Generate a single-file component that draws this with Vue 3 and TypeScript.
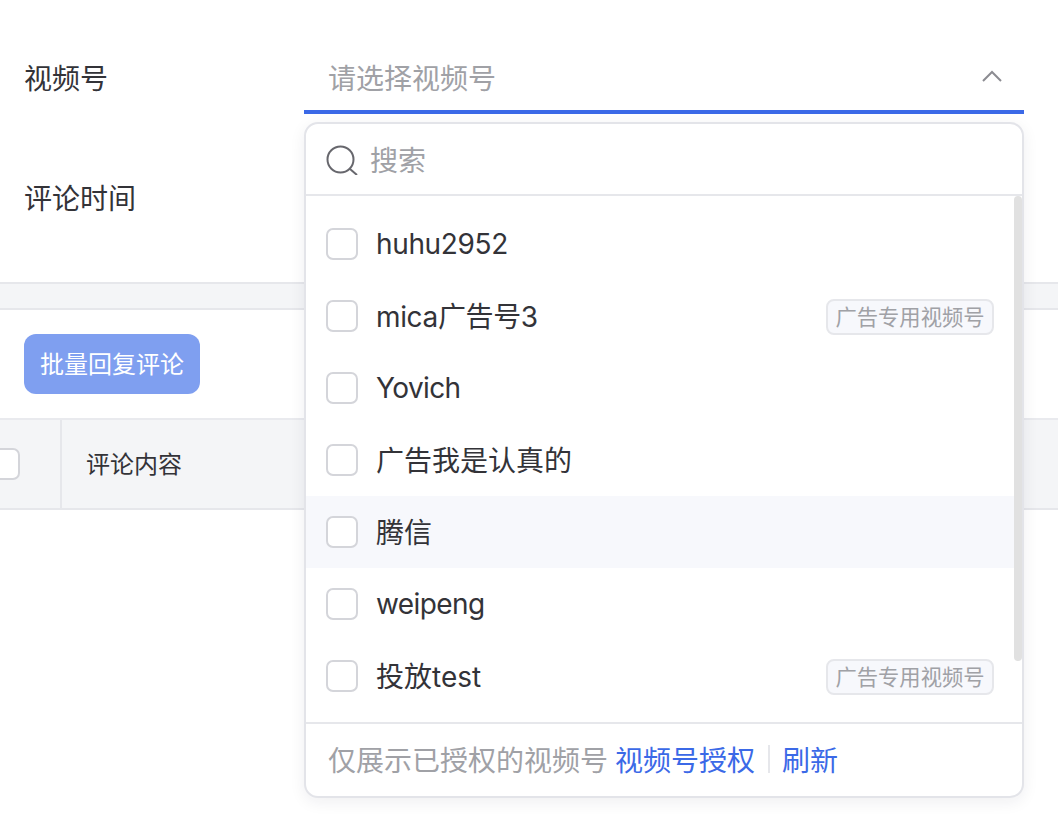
<script setup lang="ts">
interface Account {
  name: string
  ad: boolean
  hover?: boolean
}
const accounts: Account[] = [
  { name: 'huhu2952', ad: false },
  { name: 'mica广告号3', ad: true },
  { name: 'Yovich', ad: false },
  { name: '广告我是认真的', ad: false },
  { name: '腾信', ad: false, hover: true },
  { name: 'weipeng', ad: false },
  { name: '投放test', ad: true },
]
const nameClass = (name: string) => ({
  tight: /^[a-zA-Z]/.test(name),
  tighter: /^[a-zA-Z]+$/.test(name),
  cjk: /[^\x00-\x7f]/.test(name),
})
</script>

<template>
  <div class="page">
    <section class="form">
      <div class="row">
        <span class="label">视频号</span>
        <div class="select-wrap">
          <div class="select">
            <span class="placeholder">请选择视频号</span>
            <svg class="chevron" width="20" height="12" viewBox="0 0 20 12" fill="none">
              <path d="M1 11L10 2L19 11" stroke="#8c8c92" stroke-width="2" />
            </svg>
          </div>
          <div class="dropdown">
            <div class="search">
              <svg class="search-icon" width="32" height="32" viewBox="0 0 32 32" fill="none">
                <circle cx="14.500" cy="16.500" r="13" stroke="#67676d" stroke-width="2" />
                <path d="M24 26L31 32" stroke="#67676d" stroke-width="2" />
              </svg>
              <span class="search-text">搜索</span>
            </div>
            <div class="list">
              <div class="scrollbar"></div>
              <div v-for="a in accounts" :key="a.name" class="item" :class="{ hover: a.hover }">
                <span class="checkbox"></span>
                <span class="item-name" :class="nameClass(a.name)">{{ a.name }}</span>
                <span v-if="a.ad" class="tag">广告专用视频号</span>
              </div>
            </div>
            <div class="footer">
              <span class="hint">仅展示已授权的视频号</span>
              <span class="link">视频号授权</span>
              <span class="sep"></span>
              <span class="link">刷新</span>
            </div>
          </div>
        </div>
      </div>
      <div class="row">
        <span class="label">评论时间</span>
      </div>
    </section>
    <div class="band"></div>
    <div class="toolbar">
      <button class="batch" type="button">批量回复评论</button>
    </div>
    <div class="thead">
      <div class="cell-check"><span class="checkbox"></span></div>
      <div class="cell-content">评论内容</div>
    </div>
  </div>
</template>

<style>
html, body { margin: 0; background: #fff; }
</style>

<style scoped>
.page {
  width: 1058px;
  height: 814px;
  overflow: hidden;
  background: #fff;
  color: #333338;
  font-family: Inter, "Noto Sans CJK SC", sans-serif;
  font-size: 28px;
}
.form {
  display: flex;
  flex-direction: column;
  gap: 48px;
  padding: 42px 34px 48px 24px;
}
.row {
  display: flex;
  align-items: center;
  height: 72px;
}
.label {
  width: 280px;
  flex: none;
  padding-bottom: 2px;
}
.select-wrap {
  position: relative;
  flex: 1;
  height: 72px;
}
.select {
  box-sizing: border-box;
  height: 72px;
  display: flex;
  align-items: center;
  justify-content: space-between;
  padding: 0 22px 0 24px;
  border-bottom: 4px solid #3b69e7;
}
.placeholder { color: #a0a1a6; padding-top: 2px; }
.chevron { margin-top: 0; }
.dropdown {
  position: absolute;
  z-index: 2;
  top: 80px;
  left: 0;
  right: 0;
  box-sizing: border-box;
  height: 676px;
  display: flex;
  flex-direction: column;
  background: #fff;
  border: 2px solid #e3e4e9;
  border-radius: 14px;
  box-shadow: 0 4px 16px rgba(30, 35, 60, 0.07);
}
.search {
  box-sizing: border-box;
  height: 72px;
  flex: none;
  display: flex;
  align-items: center;
  padding-left: 20px;
  border-bottom: 2px solid #e6e7eb;
}
.search-icon { flex: none; }
.search-text { margin-left: 12px; color: #a0a1a6; }
.list {
  position: relative;
  flex: 1;
  padding: 12px 0 10px;
}
.scrollbar {
  position: absolute;
  top: 0;
  right: 0;
  width: 8px;
  height: 465px;
  border-radius: 4px;
  background: #e1e1e1;
}
.item {
  height: 72px;
  display: flex;
  align-items: center;
  padding: 0 28px 0 20px;
}
.item.hover { background: #f7f8fc; }
.checkbox {
  box-sizing: border-box;
  flex: none;
  width: 32px;
  height: 32px;
  border: 2px solid #d4d5da;
  border-radius: 7px;
  background: #fff;
}
.item-name {
  margin-left: 18px;
  flex: 1;
  color: #333338;
}
.item-name.tight { letter-spacing: -0.35px; }
.item-name.tighter { letter-spacing: -0.6px; }
.item-name.cjk { padding-bottom: 2px; }
.tag {
  box-sizing: border-box;
  height: 36px;
  width: 168px;
  margin-top: 1px;
  padding-bottom: 2px;
  display: flex;
  align-items: center;
  justify-content: center;
  flex: none;
  font-size: 21.300px;
  white-space: nowrap;
  color: #a0a1a6;
  background: #f7f8fc;
  border: 2px solid #e6e7eb;
  border-radius: 8px;
}
.footer {
  box-sizing: border-box;
  flex: none;
  height: 74px;
  display: flex;
  align-items: center;
  padding: 0 0 2px 22px;
  border-top: 2px solid #e6e7eb;
  white-space: nowrap;
}
.hint { color: #a0a1a6; }
.link { color: #3b69e7; }
.hint + .link { margin-left: 7px; }
.sep {
  width: 2px;
  height: 28px;
  margin: 0 12px 0 13px;
  background: #e6e7eb;
}
.band {
  height: 24px;
  background: #f4f5f7;
  border-top: 2px solid #e6e7eb;
  border-bottom: 2px solid #e6e7eb;
}
.toolbar {
  padding: 24px;
}
.batch {
  display: block;
  width: 176px;
  height: 60px;
  padding: 0 0 4px;
  border: 0;
  border-radius: 12px;
  background: #7f9ff0;
  color: #fff;
  font-family: inherit;
  font-size: 24px;
}
.thead {
  box-sizing: border-box;
  height: 92px;
  display: flex;
  background: #f4f5f7;
  border-top: 2px solid #e9eaee;
  border-bottom: 2px solid #e6e7eb;
}
.cell-check {
  box-sizing: border-box;
  width: 62px;
  flex: none;
  display: flex;
  align-items: center;
  border-right: 2px solid #e6e7eb;
}
.cell-check .checkbox { margin-left: -12px; }
.cell-content {
  display: flex;
  align-items: center;
  padding: 0 0 4px 24px;
  font-size: 24px;
}
</style>
